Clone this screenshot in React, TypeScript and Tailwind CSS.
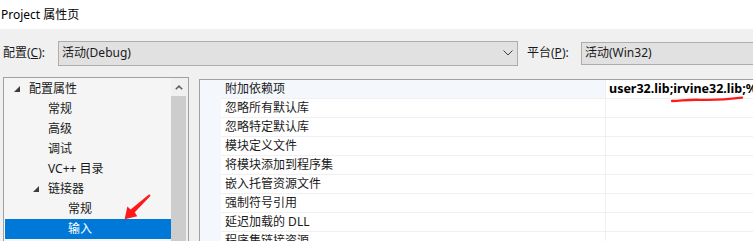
import React from "react";

const font = {
  fontFamily: '"Noto Sans", "Noto Sans CJK SC", sans-serif',
};

type TreeItem = {
  label: string;
  indent: number;
  expanded?: boolean;
  selected?: boolean;
};

const treeItems: TreeItem[] = [
  { label: "配置属性", indent: 0, expanded: true },
  { label: "常规", indent: 1 },
  { label: "高级", indent: 1 },
  { label: "调试", indent: 1 },
  { label: "VC++ 目录", indent: 1 },
  { label: "链接器", indent: 1, expanded: true },
  { label: "常规", indent: 2 },
  { label: "输入", indent: 2, selected: true },
];

const propRows = [
  "附加依赖项",
  "忽略所有默认库",
  "忽略特定默认库",
  "模块定义文件",
  "将模块添加到程序集",
  "嵌入托管资源文件",
  "强制符号引用",
  "延迟加载的 DLL",
  "程序集链接资源",
];

const ExpandMark = () => (
  <svg width="6" height="6" viewBox="0 0 6 6" className="shrink-0">
    <polygon points="6,0 6,6 0,6" fill="#3c3c3c" />
  </svg>
);

const ComboArrow = () => (
  <svg width="10" height="6" viewBox="0 0 10 6">
    <polyline
      points="0.5,0.5 5,5 9.5,0.5"
      fill="none"
      stroke="#404040"
      strokeWidth="1"
    />
  </svg>
);

const App = () => {
  return (
    <div
      className="relative w-[753px] h-[241px] overflow-hidden bg-[#f0f0f0] text-[12px] text-[#1a1a1a]"
      style={font}
    >
      {/* ---------------------------- title ---------------------------- */}
      <div className="h-[29px] bg-white flex items-center pl-[1px] text-black">
        Project 属性页
      </div>

      {/* ------------------------- config row -------------------------- */}
      <div className="h-[48px] flex items-center">
        <div className="w-[58px] shrink-0 pl-[3px] whitespace-nowrap">
          配置(<span className="underline">C</span>):
        </div>
        <div className="w-[460px] shrink-0 h-[25px] bg-[#e1e1e1] border border-[#adadad] flex items-center justify-between pl-[3px] pr-[4px]">
          <span>活动(Debug)</span>
          <ComboArrow />
        </div>
        <div className="w-[63px] shrink-0 pl-[9px] whitespace-nowrap">
          平台(<span className="underline">P</span>):
        </div>
        <div className="w-[200px] shrink-0 h-[23px] bg-[#e1e1e1] border border-[#adadad] flex items-center pl-[3px]">
          活动(Win32)
        </div>
      </div>

      {/* ---------------------------- body ----------------------------- */}
      <div className="flex">
        {/* tree */}
        <div className="ml-[3px] w-[186px] shrink-0 h-[170px] border-t border-l border-r border-[#a0a0a0] bg-[#f5f5f5] flex">
          <div className="flex-1 pt-[1px] pl-[1px]">
            {treeItems.map((item, index) => (
              <div
                key={index}
                className={
                  item.selected
                    ? "h-[20px] flex items-center bg-[#0078d7] text-white"
                    : "h-[20px] flex items-center"
                }
              >
                <div
                  className={
                    item.indent === 0
                      ? "w-[24px] pl-[9px] flex items-center"
                      : item.indent === 1
                      ? "w-[43px] pl-[28px] flex items-center"
                      : "w-[63px]"
                  }
                >
                  {item.expanded && <ExpandMark />}
                </div>
                <span className="whitespace-nowrap">{item.label}</span>
              </div>
            ))}
          </div>
          <div className="w-[17px] bg-[#f0f0f0] flex flex-col">
            <div className="h-[18px] w-[15px] flex items-center justify-center">
              <svg width="8" height="5" viewBox="0 0 8 5">
                <polyline
                  points="0.8,4.3 4,1.2 7.2,4.3"
                  fill="none"
                  stroke="#606060"
                  strokeWidth="1.6"
                />
              </svg>
            </div>
            <div className="w-[15px] flex-1 bg-[#cdcdcd]" />
          </div>
        </div>

        {/* property grid */}
        <div className="ml-[10px] mt-[2px] flex-1 min-w-0 h-[170px] border-t border-l border-[#a0a0a0] bg-white flex overflow-hidden">
          <div className="w-[21px] shrink-0 bg-[#f4f7fc]" />
          <div className="flex-1 min-w-0">
            {propRows.map((name, index) => (
              <div
                key={index}
                className={
                  index === 0
                    ? "h-[19px] flex border-b border-[#f0f0f0] bg-[#f4f7fc]"
                    : "h-[19px] flex border-b border-[#f0f0f0]"
                }
              >
                <div className="w-[385px] shrink-0 pl-[4px] flex items-center border-r border-[#f0f0f0] whitespace-nowrap">
                  {name}
                </div>
                <div
                  className={
                    index === 0
                      ? "flex-1 min-w-0 overflow-hidden bg-white pl-[3px] flex items-center font-bold text-[12.5px] text-black whitespace-nowrap"
                      : "flex-1 min-w-0"
                  }
                >
                  {index === 0 && "user32.lib;irvine32.lib;%"}
                </div>
              </div>
            ))}
          </div>
        </div>
      </div>

      {/* ------------------------ red annotations ----------------------- */}
      <svg
        className="absolute left-0 top-0 pointer-events-none"
        width="753"
        height="241"
        viewBox="0 0 753 241"
      >
        <path
          d="M672 101 C 684 100.4, 690 99.4, 700 99.8 C 712 100.2, 726 99.6, 742 97.6"
          fill="none"
          stroke="#ff1a1a"
          strokeWidth="2.3"
          strokeLinecap="round"
        />
        <polygon
          points="149.2,194.2 150.6,195.8 134.8,212.2 137.2,216.2 124.6,219.2 127.4,206.4 130.6,209.6"
          fill="#ff1a1a"
        />
      </svg>
    </div>
  );
};

export default App;
